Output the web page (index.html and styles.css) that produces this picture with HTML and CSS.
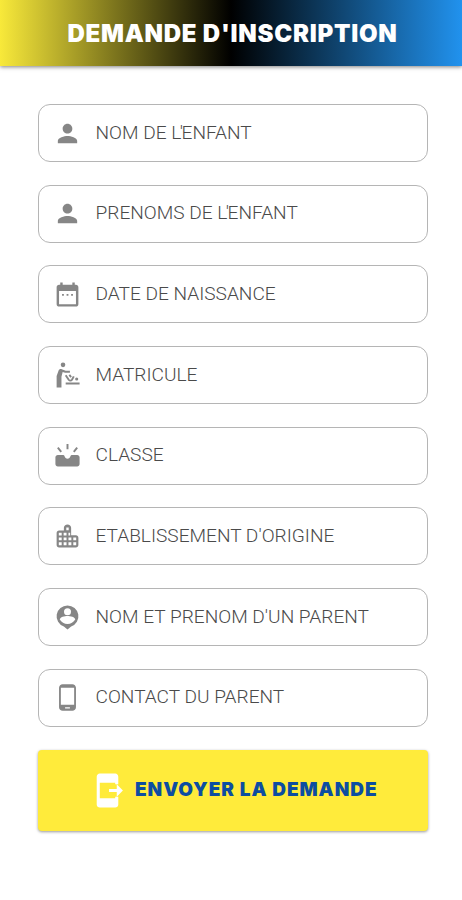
FILE: index.html
```html
<!DOCTYPE html>
<html lang="fr">
<head>
    <meta charset="UTF-8">
    <title>Demande d'inscription</title>
    <link rel="stylesheet" href="styles.css">
</head>
<body>
    <header class="header">
        <h1 class="title">DEMANDE D'INSCRIPTION</h1>
    </header>

    <form class="form">
        <label class="field">
            <svg class="icon" viewBox="0 0 24 24"><path d="M12 12c2.21 0 4-1.79 4-4s-1.79-4-4-4-4 1.79-4 4 1.79 4 4 4zm0 2c-2.67 0-8 1.34-8 4v2h16v-2c0-2.66-5.33-4-8-4z"/></svg>
            <span class="label">NOM DE <span class="tight">L'</span>ENFANT</span>
            <input class="input" type="text" name="nom">
        </label>

        <label class="field">
            <svg class="icon" viewBox="0 0 24 24"><path d="M12 12c2.21 0 4-1.79 4-4s-1.79-4-4-4-4 1.79-4 4 1.79 4 4 4zm0 2c-2.67 0-8 1.34-8 4v2h16v-2c0-2.66-5.33-4-8-4z"/></svg>
            <span class="label">PRENOMS DE <span class="tight">L'</span>ENFANT</span>
            <input class="input" type="text" name="prenoms">
        </label>

        <label class="field">
            <svg class="icon" viewBox="0 0 24 24"><path d="M9 11.5H7.5V13H9v-1.5zm3.75 0h-1.5V13h1.5v-1.5zm3.75 0H15V13h1.5v-1.5zM19 4h-1V2h-2v2H8V2H6v2H5c-1.11 0-2 .9-2 2v14c0 1.1.89 2 2 2h14c1.1 0 2-.9 2-2V6c0-1.1-.9-2-2-2zm0 16H5V9h14v11z"/></svg>
            <span class="label">DATE DE NAISSANCE</span>
            <input class="input" type="text" name="naissance">
        </label>

        <label class="field">
            <svg class="icon" viewBox="0 0 24 24">
                <circle cx="8.3" cy="3.2" r="1.9"/>
                <path d="M3 22V12.5L4.5 8.2C4.9 7 6 6.5 7.2 6.800L10.5 8H14v1.8h-4L8 9.2 7 13v9z"/>
                <path class="line" d="M10.5 11.8l2.5 3.7c.8 1 2 1 2.700 0l1.5-2.8M13.5 11.5l1.5 1.8M10.5 18.6H22"/>
                <circle cx="19.6" cy="14.9" r="1.3"/>
            </svg>
            <span class="label">MATRICULE</span>
            <input class="input" type="text" name="matricule">
        </label>

        <label class="field">
            <svg class="icon" viewBox="0 0 24 24">
                <path d="M4 11.5h4.5c.5 0 .7.3.9.7C9.9 13.8 10.8 14.6 12 14.6s2.1-.8 2.6-2.4c.2-.4.4-.7.9-.7H20c1.1 0 2 .9 2 2V19c0 1.1-.9 2-2 2H4c-1.1 0-2-.9-2-2v-5.500c0-1.100.9-2 2-2z"/>
                <path class="line" d="M12 2.5v4.3M4 5.5L6.800 9M20 5.5L17.200 9"/>
            </svg>
            <span class="label">CLASSE</span>
            <input class="input" type="text" name="classe">
        </label>

        <label class="field">
            <svg class="icon" viewBox="0 0 24 24"><path fill-rule="evenodd" d="M15 11V4.8C15 3 13.7 2 12 2S9 3 9 4.800V7H5c-1.100 0-2 .9-2 2v10c0 1.100.9 2 2 2h14c1.100 0 2-.9 2-2v-6c0-1.100-.9-2-2-2h-4zM4.800 8.800h2.400v2.400H4.800zm0 4h2.400v2.400H4.800zm0 4h2.400v2.400H4.800zm4-8h2.400v2.400H8.800zm0 4h2.400v2.400H8.800zm0 4h2.400v2.400H8.800zm4-8h1.400v2.400h-1.400zm0 4h2.400v2.400h-2.400zm0 4h2.400v2.400h-2.400zm4-4h2.400v2.400h-2.400zm0 4h2.400v2.400h-2.400zM11 4.500h2v2.300h-2z"/></svg>
            <span class="label">ETABLISSEMENT D'ORIGINE</span>
            <input class="input" type="text" name="etablissement">
        </label>

        <label class="field">
            <svg class="icon" viewBox="0 0 24 24">
                <path d="M12 2a9 9 0 0 0-3 17.500L12 22l3-2.500A9 9 0 0 0 12 2z"/>
                <circle class="hole" cx="12" cy="7.2" r="2.9"/>
                <path class="hole" d="M5.6 13.7c0-2.1 4.2-3 6.4-3s6.4.9 6.4 3c-1.29 2.3-3.8 3.7-6.4 3.7s-5.1-1.4-6.4-3.7z"/>
            </svg>
            <span class="label">NOM ET PRENOM D'UN PARENT</span>
            <input class="input" type="text" name="parent">
        </label>

        <label class="field">
            <svg class="icon" viewBox="0 0 24 24"><path d="M16 1H8C6.34 1 5 2.34 5 4v16c0 1.66 1.34 3 3 3h8c1.66 0 3-1.34 3-3V4c0-1.66-1.34-3-3-3zm-2 20h-4v-1h4v1zm3.5-3h-11V4h11v14z"/></svg>
            <span class="label">CONTACT DU PARENT</span>
            <input class="input" type="tel" name="contact">
        </label>

        <button class="submit" type="button">
            <svg class="submit-icon" viewBox="0 0 24 24"><path d="M17 17H7V7h10v1h2V3c0-1.1-.9-2-2-2H7c-1.1 0-2 .9-2 2v18c0 1.1.9 2 2 2h10c1.1 0 2-.9 2-2v-5h-2v1zM22 12l-4-4v3h-5v2h5v3z"/></svg>
            <span class="submit-text">ENVOYER LA DEMANDE</span>
        </button>
    </form>
</body>
</html>
```

FILE: styles.css
```css
* {
    box-sizing: border-box;
}

body {
    margin: 0;
    height: 900px;
    background-color: #fff;
    font-family: Roboto, "Liberation Sans", sans-serif;
}

.header {
    height: 66px;
    display: flex;
    align-items: center;
    justify-content: center;
    background: linear-gradient(to right, #f8e93a, #000 50%, #2192ee);
    box-shadow: 0 1px 4px rgba(0, 0, 0, 0.5);
}

.title {
    margin: 0 0 0 3px;
    color: #fff;
    font-family: Inter, sans-serif;
    font-size: 24px;
    font-weight: 900;
    letter-spacing: 0.75px;
    white-space: nowrap;
}

.form {
    display: flex;
    flex-direction: column;
    gap: 22.7px;
    padding: 38px 34px 0 38px;
}

.field {
    display: flex;
    align-items: center;
    height: 58px;
    padding: 0 13.5px;
    border: 1px solid #b5b5b5;
    border-radius: 12px;
}

.icon {
    flex: none;
    width: 29px;
    height: 29px;
    fill: #868686;
}

.line {
    fill: none;
    stroke: #868686;
    stroke-width: 1.6;
}

.hole {
    fill: #fff;
}

.label {
    margin-left: 14px;
    padding-bottom: 2px;
    color: #4a4a4a;
    font-size: 19.1px;
    font-weight: 300;
    white-space: nowrap;
}

/* closes the gap round the apostrophe */
.tight {
    letter-spacing: -1.5px;
}

.input {
    flex: 1;
    min-width: 0;
    border: none;
    outline: none;
    background: none;
}

.submit {
    display: flex;
    align-items: center;
    height: 81px;
    padding: 0 0 0 51px;
    border: none;
    border-radius: 4px;
    background-color: #ffeb3b;
    box-shadow: 0 1px 3px rgba(0, 0, 0, 0.4);
}

.submit-icon {
    flex: none;
    width: 37px;
    height: 37px;
    fill: #fff;
}

.submit-text {
    margin-left: 9px;
    padding-bottom: 2px;
    color: #0d4da1;
    font-family: Inter, sans-serif;
    font-size: 19px;
    font-weight: 900;
    letter-spacing: 0.95px;
    white-space: nowrap;
}
```
